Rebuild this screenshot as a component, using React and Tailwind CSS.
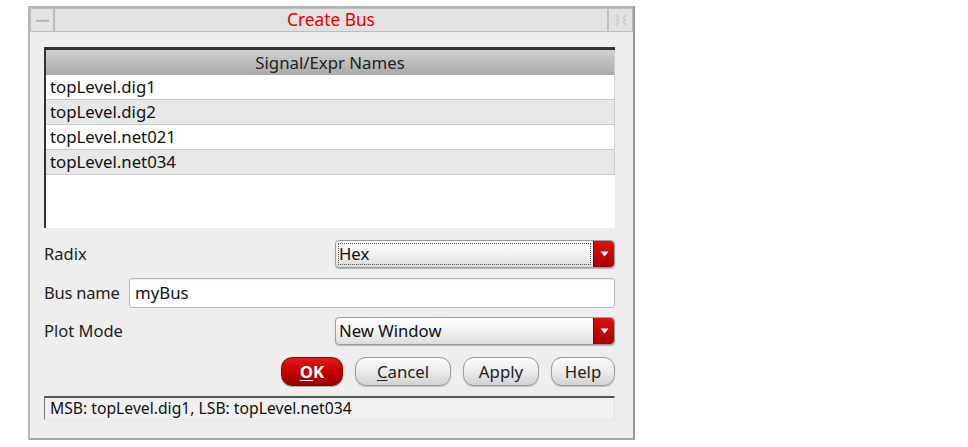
import React from "react";

function Arrow() {
  return (
    <div className="w-[21px] self-stretch flex items-center justify-center rounded-r-[4px] bg-gradient-to-b from-[#e01010] to-[#a80000] border-l border-[#8a0000]">
      <svg width="9" height="6" viewBox="0 0 9 6"><polygon points="0.5,0.5 8.5,0.5 4.5,5.5" fill="#ffffff" /></svg>
    </div>
  );
}

function Combo({ label, focus }) {
  return (
    <div className="w-[280px] h-[28px] flex rounded-[4px] border border-[#9c9c9c] bg-gradient-to-b from-[#ffffff] via-[#f2f2f2] to-[#dcdcdc] shadow-[0_1px_1px_rgba(0,0,0,0.25)]">
      <div className="flex-1 flex items-center p-[2px]">
        <div className={"flex-1 h-full flex items-center " + (focus ? "border border-dotted border-[#555]" : "border border-transparent")}>
          <span className="text-[16.7px] text-[#111]">{label}</span>
        </div>
      </div>
      <Arrow />
    </div>
  );
}

function Btn({ children, w }) {
  return (
    <div className={"h-[29px] flex items-center justify-center rounded-[11px] border border-[#9a9a9a] bg-gradient-to-b from-[#fbfbfb] via-[#ececec] to-[#d2d2d2] shadow-[0_1px_1px_rgba(0,0,0,0.2)] text-[16.8px] text-[#222] " + w}>
      {children}
    </div>
  );
}

export default function App() {
  const rows = ["topLevel.dig1", "topLevel.dig2", "topLevel.net021", "topLevel.net034"];
  return (
    <div className="w-[968px] h-[447px] bg-white pt-[6px] pl-[28px]" style={{ fontFamily: '"Noto Sans", "Open Sans", sans-serif' }}>
      <div className="w-[607px] h-[434px] bg-[#eeeeee] border-l-2 border-t-2 border-[#b4b4b4] border-r-2 border-b-2 border-r-[#9a9a9a] border-b-[#a8a8a8] flex flex-col">
        {/* title bar */}
        <div className="h-[24px] flex">
          <div className="w-[24px] h-[24px] border border-[#bdbdbd] bg-[#e4e4e4] flex items-center justify-center">
            <div className="w-[13px] h-[3px] bg-[#b9b9b9] border-t border-[#d8d8d8]"></div>
          </div>
          <div className="flex-1 h-[24px] border border-[#bdbdbd] bg-[#e2e2e2] flex items-center justify-center">
            <span className="text-[17.3px] text-[#e00000] leading-none">Create Bus</span>
          </div>
          <div className="w-[25px] h-[24px] border border-[#bdbdbd] bg-[#e2e2e2] flex items-center justify-center">
            <svg width="12" height="12" viewBox="0 0 12 12" fill="none" stroke="#c8c8c8" strokeWidth="1.2">
              <path d="M1 1 L4 4 M1 11 L4 8 M11 1 L8 4 M11 11 L8 8 M4 4 L1 7 M8 4 L11 7 M4 8 L1 5 M8 8 L11 5" />
            </svg>
          </div>
        </div>
        {/* body */}
        <div className="flex flex-col pl-[14px] pr-[18px] pt-[15px]">
          {/* list */}
          <div className="h-[181px] bg-white border-t-[3px] border-l-[2px] border-[#333] flex flex-col">
            <div className="h-[25px] flex items-center justify-center bg-gradient-to-b from-[#d2d2d2] to-[#a9a9a9] border-r border-[#cfcfcf]">
              <span className="text-[16.8px] text-[#222]">Signal/Expr Names</span>
            </div>
            {rows.map((r, i) => (
              <div key={r} className={"h-[25px] flex items-center pl-[4px] border-b border-[#c8cccc] border-r " + (i % 2 === 0 ? "bg-white border-r-[#d0d0d0]" : "bg-[#e8e8e8] border-r-[#cfcfcf]")}>
                <span className="text-[16.8px] text-[#111]">{r}</span>
              </div>
            ))}
            <div className="flex-1 bg-white"></div>
          </div>
          {/* radix */}
          <div className="mt-[12px] flex items-center justify-between h-[28px]">
            <span className="text-[16.5px] text-[#222]">Radix</span>
            <Combo label="Hex" focus />
          </div>
          {/* bus name */}
          <div className="mt-[10px] flex items-center h-[30px]">
            <span className="text-[16.5px] text-[#222] w-[85px] tracking-[-0.2px]">Bus name</span>
            <div className="flex-1 h-[30px] bg-white border border-[#b8b8b8] rounded-[3px] flex items-center pl-[5px] shadow-[inset_0_1px_1px_rgba(0,0,0,0.1)]">
              <span className="text-[16.8px] text-[#111]">myBus</span>
            </div>
          </div>
          {/* plot mode */}
          <div className="mt-[9px] flex items-center justify-between h-[28px]">
            <span className="text-[16.5px] text-[#222]">Plot Mode</span>
            <Combo label="New Window" />
          </div>
          {/* buttons */}
          <div className="mt-[12px] flex justify-end gap-[12px] h-[29px]">
            <div className="w-[62px] h-[29px] flex items-center justify-center rounded-[11px] bg-gradient-to-b from-[#e21a1a] via-[#c40000] to-[#9a0000] border border-[#8a0000] shadow-[0_1px_1px_rgba(0,0,0,0.3)]">
              <span className="text-[16.8px] font-bold text-white"><span className="underline underline-offset-2">O</span>K</span>
            </div>
            <Btn w="w-[96px]"><span><span className="underline underline-offset-2">C</span>ancel</span></Btn>
            <Btn w="w-[76px]">Apply</Btn>
            <Btn w="w-[64px]">Help</Btn>
          </div>
          {/* status */}
          <div className="mt-[10px] h-[24px] border-t-[2px] border-l border-[#555] border-l-[#777] bg-[#f0f0f0] flex items-center pl-[5px] border-r border-r-[#e0e0e0] border-b border-b-[#e6e6e6]">
            <span className="text-[15.7px] text-[#111]">MSB: topLevel.dig1, LSB: topLevel.net034</span>
          </div>
        </div>
      </div>
    </div>
  );
}
